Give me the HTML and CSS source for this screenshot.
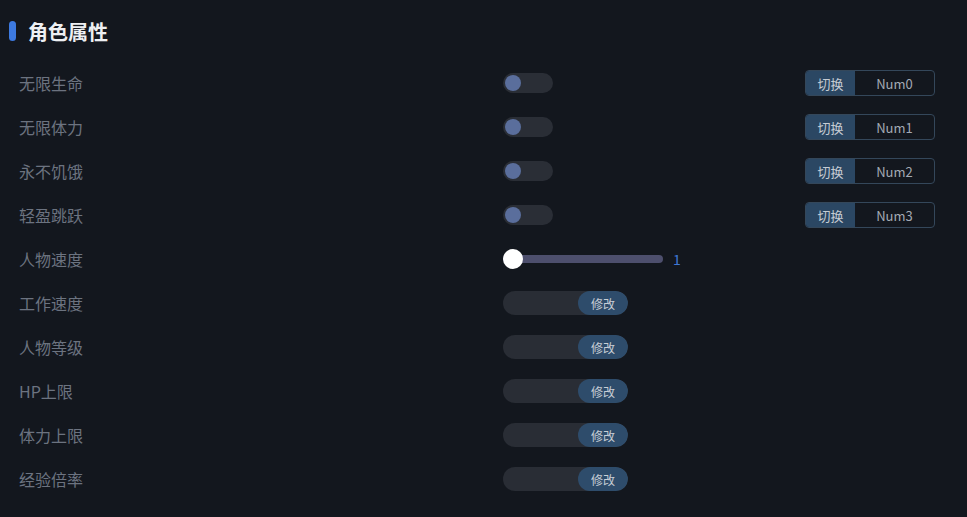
FILE: index.html
```html
<!DOCTYPE html>
<html>
<head>
    <title>角色属性</title>
    <link rel="stylesheet" href="styles.css">
</head>
<body>
    <div class="panel">
        <h2 class="title"><span class="bar"></span>角色属性</h2>

        <div class="row">
            <span class="label">无限生命</span>
            <div class="ctrl"><span class="switch"><span class="knob"></span></span></div>
            <div class="hotkey"><span class="hk-btn">切换</span><span class="hk-key">Num0</span></div>
        </div>
        <div class="row">
            <span class="label">无限体力</span>
            <div class="ctrl"><span class="switch"><span class="knob"></span></span></div>
            <div class="hotkey"><span class="hk-btn">切换</span><span class="hk-key">Num1</span></div>
        </div>
        <div class="row">
            <span class="label">永不饥饿</span>
            <div class="ctrl"><span class="switch"><span class="knob"></span></span></div>
            <div class="hotkey"><span class="hk-btn">切换</span><span class="hk-key">Num2</span></div>
        </div>
        <div class="row">
            <span class="label">轻盈跳跃</span>
            <div class="ctrl"><span class="switch"><span class="knob"></span></span></div>
            <div class="hotkey"><span class="hk-btn">切换</span><span class="hk-key">Num3</span></div>
        </div>
        <div class="row">
            <span class="label">人物速度</span>
            <div class="ctrl">
                <span class="slider"><span class="thumb"></span></span>
                <span class="value">1</span>
            </div>
        </div>
        <div class="row">
            <span class="label">工作速度</span>
            <div class="ctrl"><span class="field"><input type="text"><button>修改</button></span></div>
        </div>
        <div class="row">
            <span class="label">人物等级</span>
            <div class="ctrl"><span class="field"><input type="text"><button>修改</button></span></div>
        </div>
        <div class="row">
            <span class="label">HP上限</span>
            <div class="ctrl"><span class="field"><input type="text"><button>修改</button></span></div>
        </div>
        <div class="row">
            <span class="label">体力上限</span>
            <div class="ctrl"><span class="field"><input type="text"><button>修改</button></span></div>
        </div>
        <div class="row">
            <span class="label">经验倍率</span>
            <div class="ctrl"><span class="field"><input type="text"><button>修改</button></span></div>
        </div>
    </div>
</body>
</html>
```

FILE: styles.css
```css
body {
    margin: 0;
    background-color: #13171e;
    font-family: "Noto Sans CJK SC", "Noto Sans", sans-serif;
    height: 517px;
    overflow: hidden;
}

.panel {
    padding: 19px 32px 0 9px;
}

.title {
    display: flex;
    align-items: center;
    margin: 0 0 18px 0;
    height: 24px;
    font-size: 20px;
    font-weight: bold;
    color: #eef0f3;
}

.bar {
    width: 7px;
    height: 20px;
    border-radius: 4px;
    background-color: #3d7ae0;
    margin-right: 12px;
}

.row {
    display: flex;
    align-items: center;
    height: 44px;
    padding-left: 10px;
}

.label {
    width: 484px;
    font-size: 16px;
    color: #6c7380;
}

.ctrl {
    flex: 1;
    display: flex;
    align-items: center;
}

.switch {
    display: flex;
    align-items: center;
    width: 50px;
    height: 20px;
    border-radius: 10px;
    background-color: #2a2e36;
    padding: 0 2px;
    box-sizing: border-box;
}

.knob {
    width: 16px;
    height: 16px;
    border-radius: 50%;
    background-color: #5a6e9c;
}

.hotkey {
    display: flex;
    height: 26px;
    width: 130px;
    box-sizing: border-box;
    border: 1px solid #34475a;
    border-radius: 4px;
    overflow: hidden;
    font-size: 13px;
}

.hk-btn {
    width: 49px;
    display: flex;
    align-items: center;
    justify-content: center;
    background-color: #2b4763;
    color: #c6ccd4;
}

.hk-key {
    flex: 1;
    display: flex;
    align-items: center;
    justify-content: center;
    color: #a3aab4;
}

.slider {
    position: relative;
    display: block;
    width: 160px;
    height: 8px;
    border-radius: 4px;
    background-color: #4d4f6d;
}

.thumb {
    position: absolute;
    left: 0;
    top: -6px;
    width: 20px;
    height: 20px;
    border-radius: 50%;
    background-color: #ffffff;
}

.value {
    margin-left: 10px;
    font-size: 14px;
    color: #3f78d4;
}

.field {
    display: flex;
    width: 125px;
    height: 24px;
    border-radius: 12px;
    background-color: #292d35;
    overflow: hidden;
}

.field input {
    flex: 1;
    min-width: 0;
    border: none;
    background: transparent;
    outline: none;
}

.field button {
    width: 50px;
    border: none;
    border-radius: 12px;
    background-color: #2e4c6b;
    color: #c8ced6;
    font-family: "Noto Sans CJK SC", "Noto Sans", sans-serif;
    font-size: 12px;
    padding: 0;
}
```
